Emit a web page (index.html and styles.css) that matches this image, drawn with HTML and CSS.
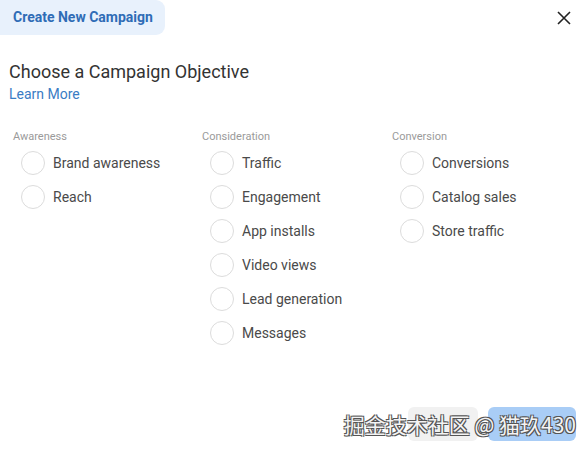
FILE: index.html
```html
<!DOCTYPE html>
<html lang="en">
<head>
<meta charset="UTF-8" />
<title>Create New Campaign</title>
<meta name="viewport" content="width=device-width, initial-scale=1.0">
<link rel="stylesheet" href="styles.css">
</head>
<body>

  <div class="dialog">
    <div class="top-bar">
      <div class="tab">Create New Campaign</div>
      <button class="close" aria-label="Close">
        <svg width="14" height="14" viewBox="0 0 14 14"><path d="M1 1L13 13M13 1L1 13" stroke="#222" stroke-width="1.6" fill="none"/></svg>
      </button>
    </div>

    <div class="intro">
      <h2>Choose a Campaign Objective</h2>
      <a href="#" class="learn">Learn More</a>
    </div>

    <div class="columns">
      <div class="col">
        <div class="col-title">Awareness</div>
        <label class="option"><span class="radio"></span>Brand awareness</label>
        <label class="option"><span class="radio"></span>Reach</label>
      </div>
      <div class="col">
        <div class="col-title">Consideration</div>
        <label class="option"><span class="radio"></span>Traffic</label>
        <label class="option"><span class="radio"></span>Engagement</label>
        <label class="option"><span class="radio"></span>App installs</label>
        <label class="option"><span class="radio"></span>Video views</label>
        <label class="option"><span class="radio"></span>Lead generation</label>
        <label class="option"><span class="radio"></span>Messages</label>
      </div>
      <div class="col">
        <div class="col-title">Conversion</div>
        <label class="option"><span class="radio"></span>Conversions</label>
        <label class="option"><span class="radio"></span>Catalog sales</label>
        <label class="option"><span class="radio"></span>Store traffic</label>
      </div>
    </div>

    <div class="actions">
      <button class="btn btn-cancel" aria-label="Cancel"></button>
      <button class="btn btn-continue" aria-label="Continue"></button>
      <div class="watermark">掘金技术社区 @ 猫玖430</div>
    </div>
  </div>

</body>
</html>
```

FILE: styles.css
```css
body {
  margin: 0;
  font-family: Roboto, "Noto Sans", Arial, sans-serif;
  background-color: #ffffff;
  color: #333;
}
.dialog {
  width: 586px;
  height: 450px;
  display: flex;
  flex-direction: column;
}
.top-bar {
  display: flex;
  justify-content: space-between;
  align-items: flex-start;
}
.tab {
  background-color: #e8f1fc;
  color: #2f6cb6;
  font-weight: bold;
  font-size: 14px;
  height: 35px;
  line-height: 35px;
  padding: 0 12px 0 13px;
  width: 140px;
  border-radius: 0 9px 9px 0;
}
.close {
  background: none;
  border: 0;
  padding: 0;
  margin: 11px 15px 0 0;
  width: 14px;
  height: 14px;
  cursor: pointer;
}
.close svg {
  display: block;
}
.intro {
  padding: 26px 9px 0 9px;
}
.intro h2 {
  margin: 0;
  font-size: 18px;
  font-weight: normal;
  color: #333;
  line-height: 22px;
}
.learn {
  display: block;
  color: #3a7cc4;
  font-size: 14px;
  text-decoration: none;
  line-height: 20px;
  margin-top: 1px;
}
.columns {
  display: grid;
  grid-template-columns: 189px 190px 190px;
  padding: 26px 0 0 13px;
}
.col-title {
  font-size: 11px;
  color: #9a9a9a;
  line-height: 14px;
  margin-bottom: 2px;
}
.option {
  display: flex;
  align-items: center;
  gap: 8px;
  height: 34px;
  padding-left: 8px;
  font-size: 14px;
  color: #4a4a4a;
}
.radio {
  width: 22px;
  height: 22px;
  border: 1px solid #dcdcdc;
  border-radius: 50%;
}
.actions {
  margin-top: auto;
  display: flex;
  justify-content: flex-end;
  gap: 10px;
  padding: 0 10px 9px 0;
  position: relative;
}
.btn {
  border: 0;
  border-radius: 6px;
  height: 34px;
}
.btn-cancel {
  width: 70px;
  background-color: #f1f1f1;
}
.btn-continue {
  width: 88px;
  background-color: #a9cdf6;
}
.watermark {
  position: absolute;
  right: 10px;
  top: 2px;
  font-family: "Noto Sans CJK SC", sans-serif;
  font-size: 21px;
  color: #f4f4f4;
  text-shadow: 1px 1px 0 #555, -1px -1px 0 #555, 1px -1px 0 #555, -1px 1px 0 #555;
  white-space: nowrap;
}
```
